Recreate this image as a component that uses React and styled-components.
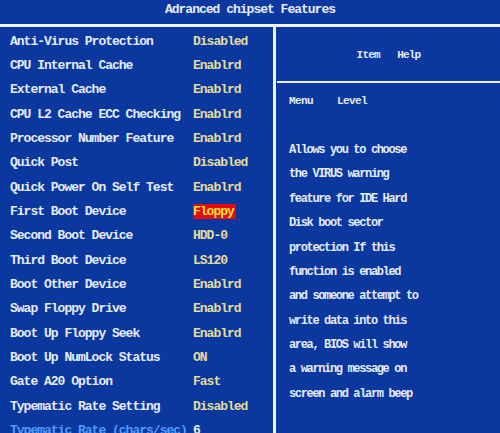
import styled, { createGlobalStyle } from "styled-components";

const GlobalStyle = createGlobalStyle`
  html, body {
    margin: 0;
    padding: 0;
    background: #0a389e;
  }
`;

const Screen = styled.div`
  width: 500px;
  height: 433px;
  overflow: hidden;
  background: #0a389e;
  font-family: "Liberation Mono", "DejaVu Sans Mono", monospace;
  font-weight: bold;
  color: #e6ecfa;
  display: flex;
  flex-direction: column;
`;

const Title = styled.div`
  height: 27px;
  display: flex;
  align-items: center;
  justify-content: center;
  font-size: 13px;
  letter-spacing: -1px;
  padding-bottom: 5px;
  box-sizing: border-box;
  border-bottom: 3px solid #eef3ff;
`;

const Main = styled.div`
  flex: 1;
  display: flex;
  min-height: 0;
`;

const LeftPanel = styled.div`
  width: 273px;
  border-right: 3px solid #eef3ff;
  padding-top: 2px;
`;

const Row = styled.div`
  height: 24.35px;
  display: grid;
  grid-template-columns: 183px auto;
  align-items: center;
  padding-left: 10px;
  font-size: 13px;
  letter-spacing: -1px;
  white-space: pre;
  color: ${(p) => (p.$dim ? "#4f9bff" : "#e6ecfa")};
`;

const Value = styled.span`
  justify-self: start;
  color: ${(p) => (p.$hot ? "#ffe23a" : p.$plain ? "#e6ecfa" : "#e4dc9c")};
  background: ${(p) => (p.$hot ? "#e40a0a" : "transparent")};
  padding-right: ${(p) => (p.$hot ? "2px" : "0")};
  line-height: 15px;
`;

const RightPanel = styled.div`
  flex: 1;
  display: flex;
  flex-direction: column;
  padding-left: 1px;
`;

const HelpHeader = styled.div`
  height: 56px;
  border-bottom: 2px solid #eef3ff;
  display: flex;
  align-items: center;
  justify-content: center;
  font-size: 11px;
  letter-spacing: -0.8px;
  white-space: pre;
  padding-top: 1px;
  box-sizing: border-box;
`;

const HelpBody = styled.div`
  padding: 6px 0 0 12px;
  white-space: pre;
`;

const HelpLine = styled.div`
  height: 24.4px;
  display: flex;
  align-items: center;
  font-size: ${(p) => (p.$head ? "11px" : "12px")};
  letter-spacing: ${(p) => (p.$head ? "-0.6px" : "-1.35px")};
`;

const rows = [
  ["Anti-Virus Protection", "Disabled"],
  ["CPU Internal Cache", "Enablrd"],
  ["External Cache", "Enablrd"],
  ["CPU L2 Cache ECC Checking", "Enablrd"],
  ["Processor Number Feature", "Enablrd"],
  ["Quick Post", "Disabled"],
  ["Quick Power On Self Test", "Enablrd"],
  ["First Boot Device", "Floppy", "hot"],
  ["Second Boot Device", "HDD-0"],
  ["Third Boot Device", "LS120"],
  ["Boot Other Device", "Enablrd"],
  ["Swap Floppy Drive", "Enablrd"],
  ["Boot Up Floppy Seek", "Enablrd"],
  ["Boot Up NumLock Status", "ON"],
  ["Gate A20 Option", "Fast"],
  ["Typematic Rate Setting", "Disabled"],
  ["Typematic Rate (chars/sec)", "6", "dim"],
];

const help = [
  "Allows you to choose",
  "the VIRUS warning",
  "feature for IDE Hard",
  "Disk boot sector",
  "protection If this",
  "function is enabled",
  "and someone attempt to",
  "write data into this",
  "area, BIOS will show",
  "a warning message on",
  "screen and alarm beep",
];

export default function App() {
  return (
    <Screen>
      <GlobalStyle />
      <Title>Adranced chipset Features</Title>
      <Main>
        <LeftPanel>
          {rows.map(([label, value, kind]) => (
            <Row key={label} $dim={kind === "dim"}>
              <span>{label}</span>
              <Value $hot={kind === "hot"} $plain={kind === "dim"}>
                {value}
              </Value>
            </Row>
          ))}
        </LeftPanel>
        <RightPanel>
          <HelpHeader>{"Item   Help"}</HelpHeader>
          <HelpBody>
            <HelpLine $head>{"Menu    Level"}</HelpLine>
            <HelpLine />
            {help.map((line) => (
              <HelpLine key={line}>{line}</HelpLine>
            ))}
          </HelpBody>
        </RightPanel>
      </Main>
    </Screen>
  );
}
